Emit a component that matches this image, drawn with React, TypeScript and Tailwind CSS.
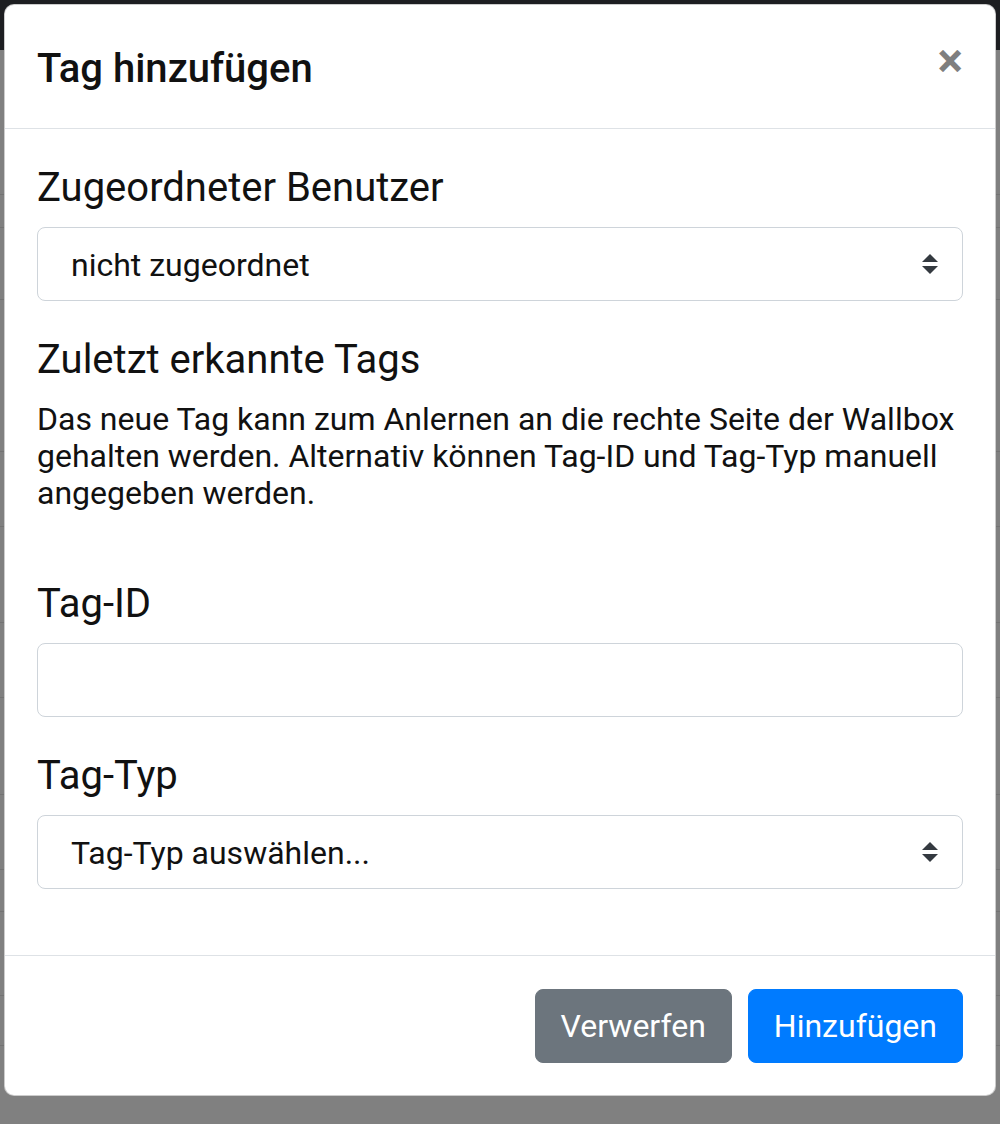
import React from "react";

const font = { fontFamily: "Roboto, 'Liberation Sans', sans-serif" };

const SelectArrows = () => (
  <svg width="16" height="20" viewBox="0 0 4 5">
    <path fill="#343a40" d="M2 0L0 2h4zm0 5L0 3h4z" />
  </svg>
);

const FakeSelect = ({ value }: { value: string }) => (
  <div className="h-[74px] border border-[#ced4da] rounded-[8px] flex items-center justify-between pl-[33px] pr-[24px] bg-white">
    <span className="text-[32px] leading-[48px] text-[#111] mt-[2px]">{value}</span>
    <SelectArrows />
  </div>
);

const Label = ({ children }: { children: React.ReactNode }) => (
  <div className="text-[40px] leading-[54px] mb-[12px] text-[#111]">{children}</div>
);

// rows of the dimmed page behind the modal
const bgRows = [145, 33, 72, 152, 75, 96, 75, 97, 75, 42, 84, 50];

const App = () => {
  return (
    <div className="relative w-[1000px] h-[1124px] overflow-hidden bg-[#808080]" style={font}>
      {/* page behind the backdrop */}
      <div className="h-[50px] bg-[#1d1e21]" />
      <div className="flex flex-col">
        {bgRows.map((h, i) => (
          <div key={i} className="border-b border-[#737373] flex" style={{ height: h }}>
            <div className="w-[543px] border-r border-[#737373]" />
          </div>
        ))}
      </div>

      {/* modal */}
      <div className="absolute left-[4px] top-[4px] w-[992px] h-[1092px] bg-white rounded-[10px] border border-[rgba(0,0,0,0.2)] flex flex-col">
        <div className="flex items-start justify-between px-[32px] pt-[34px] pb-[29px] border-b border-[#dee2e6]">
          <h5 className="text-[40px] leading-[60px] font-medium text-[#111]">Tag hinzufügen</h5>
          <span className="text-[48px] leading-none font-bold text-black/50 -mt-[2px]">×</span>
        </div>

        <div className="px-[32px] pt-[32px] pb-[32px] flex-1">
          <Label>Zugeordneter Benutzer</Label>
          <FakeSelect value="nicht zugeordnet" />

          <div className="mt-[32px]">
            <Label>Zuletzt erkannte Tags</Label>
            <p className="-mt-[12px] pt-[14px] text-[32px] leading-[37px] text-[#111]">
              Das neue Tag kann zum Anlernen an die rechte Seite der Wallbox
              <br />
              gehalten werden. Alternativ können Tag-ID und Tag-Typ manuell
              <br />
              angegeben werden.
            </p>
          </div>

          <div className="mt-[65px]">
            <Label>Tag-ID</Label>
            <div className="h-[74px] border border-[#ced4da] rounded-[8px] bg-white" />
          </div>

          <div className="mt-[32px]">
            <Label>Tag-Typ</Label>
            <FakeSelect value="Tag-Typ auswählen..." />
          </div>
        </div>

        <div className="border-t border-[#dee2e6] flex justify-end gap-[16px] px-[32px] pt-[33px] pb-[32px]">
          <button className="px-[25px] py-[12px] text-[32px] leading-[48px] text-white bg-[#6c757d] border border-[#6c757d] rounded-[8px]">
            Verwerfen
          </button>
          <button className="px-[25px] py-[12px] text-[32px] leading-[48px] text-white bg-[#007bff] border border-[#007bff] rounded-[8px]">
            Hinzufügen
          </button>
        </div>
      </div>
    </div>
  );
};

export default App;
